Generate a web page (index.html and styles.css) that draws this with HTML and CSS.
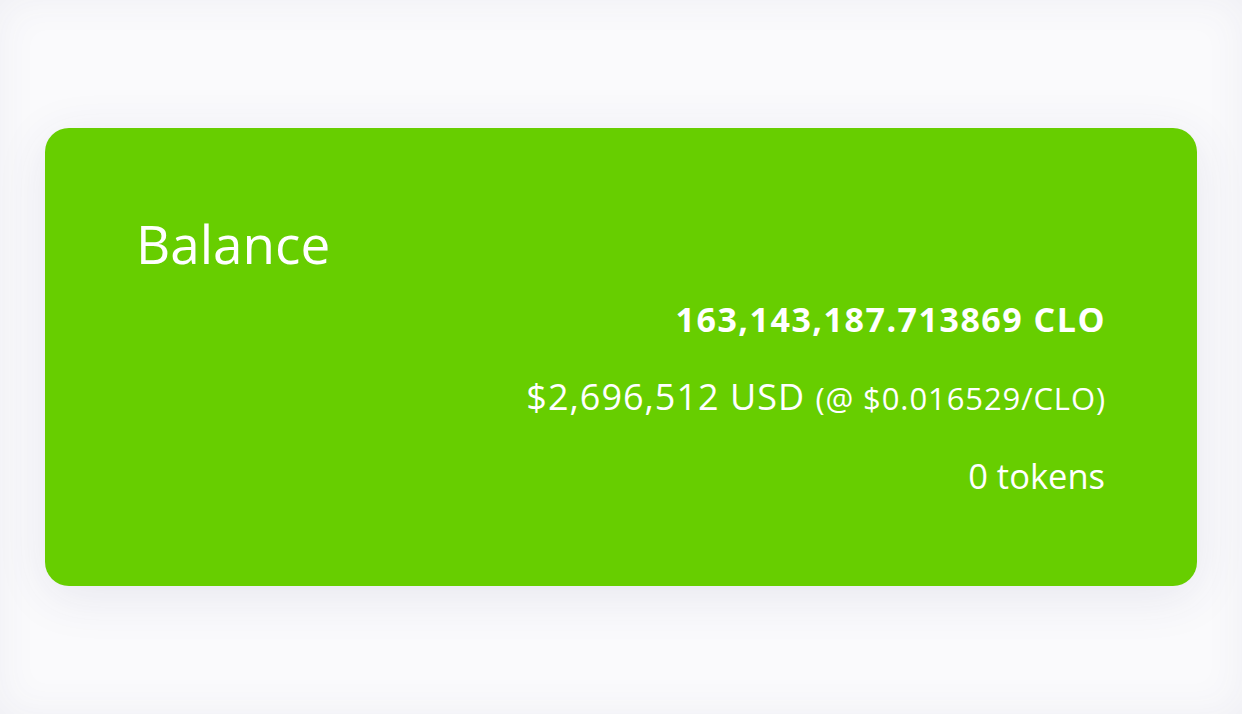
FILE: index.html
```html
<!doctype html>
<html lang="en">

<head>
  <meta charset="utf-8">
  <title>Balance</title>
  <link rel="stylesheet" href="styles.css">
</head>

<body>
  <main class="page">
    <section class="balance-card">
      <h2 class="balance-title">Balance</h2>
      <div class="balance-rows">
        <p class="balance-row balance-amount">163,143,187.713869 CLO</p>
        <p class="balance-row balance-usd">$2,696,512 USD <span class="balance-rate">(@ $0.016529/CLO)</span></p>
        <p class="balance-row">0 tokens</p>
      </div>
    </section>
  </main>
</body>

</html>
```

FILE: styles.css
```css
html { background-color:#f5f5f9; }
body { margin:0; font-family:"Open Sans","Noto Sans",sans-serif; color:#fff; }
.page { min-height:714px; padding:128px 45px 0; box-sizing:border-box; background:#fafafc; box-shadow:inset 0 0 40px rgba(60,60,120,.06); }
.balance-card { background-color:#67ce00; border-radius:24px; padding:0 92px 0 91px; height:458px; box-sizing:border-box; box-shadow:0 10px 50px rgba(60,60,120,.1); }
.balance-title { margin:0; padding-top:84px; font-size:53px; font-weight:400; line-height:64px; }
.balance-rows { text-align:right; margin-top:5px; }
.balance-row { margin:0; font-size:34.5px; line-height:77px; }
.balance-amount { font-weight:700; font-size:34px; letter-spacing:1.5px; margin-right:-1px; }
.balance-usd { font-size:36px; letter-spacing:1px; margin-right:-1px; }
.balance-rate { font-size:31px; letter-spacing:.9px; }
```
